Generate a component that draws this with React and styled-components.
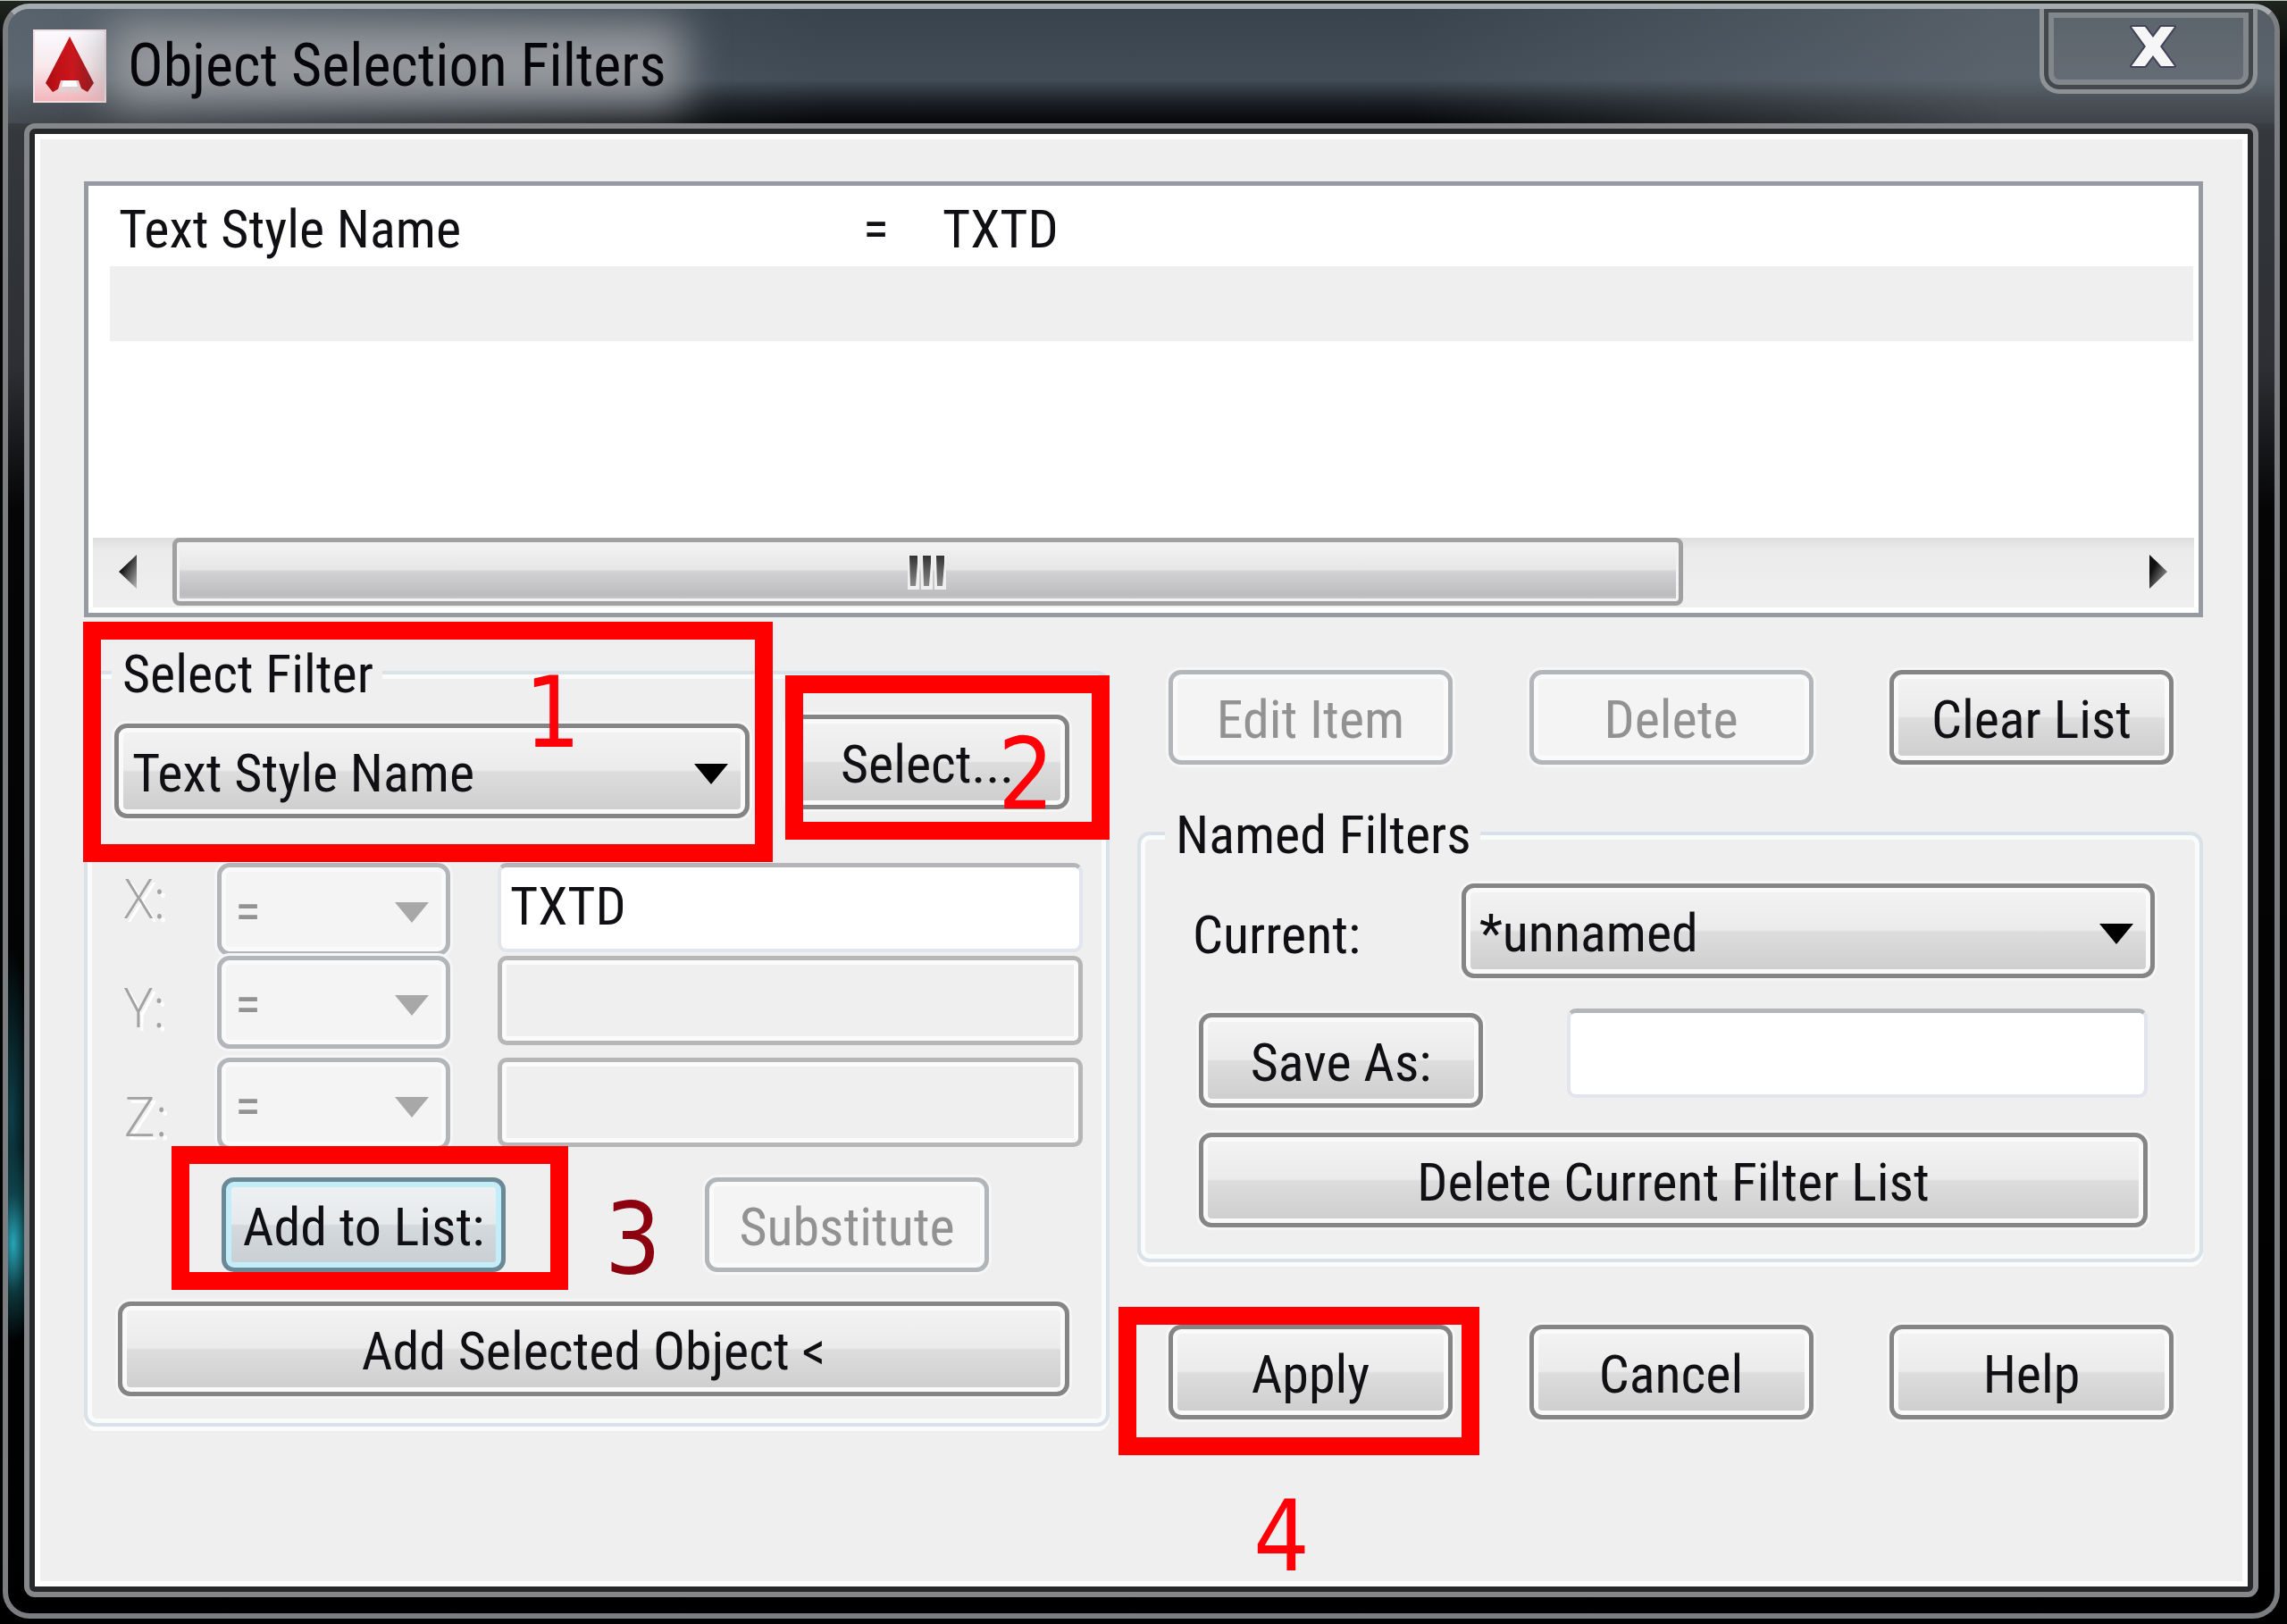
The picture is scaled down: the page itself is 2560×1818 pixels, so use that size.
import React, {useState} from 'react';
import styled, {createGlobalStyle, css} from 'styled-components';

const GlobalStyle = createGlobalStyle`
  * {
    box-sizing: border-box;
  }
  body {
    margin: 0;
    background: #050506;
  }
  body, button, input, select {
    font-family: 'Roboto Condensed', 'Liberation Sans', sans-serif;
    font-size: 60px;
    line-height: 72px;
    color: #101014;
  }
`

const Desktop = styled.div`
  min-height: 100vh;
  display: flex;
  padding: 3px 8px 6px 3px;
  border-top: 1px solid #b4beb6;
  background: linear-gradient(180deg, #20251f, #060707 60px, #000 100%);
`

const Window = styled.div`
  flex: 1;
  display: flex;
  flex-direction: column;
  border: 6px solid #7c7d80;
  border-top-color: #a6abaf;
  border-radius: 30px;
  padding: 0 18px 18px;
  background:
    radial-gradient(ellipse 30px 110px at 6px 1382px, #27a5b7, rgba(20, 90, 100, 0.6) 50%, transparent 100%) no-repeat,
    radial-gradient(ellipse 22px 190px at 4px 1240px, #0d3f48, transparent 100%) no-repeat,
    linear-gradient(180deg, #5f6871 0, #4d555e 90px, #34373b 140px, #2d2f34 400px, #050506 560px, #000 100%);
`

const TitleBar = styled.header`
  position: relative;
  height: 128px;
  margin: 0 -18px;
  padding-left: 28px;
  display: flex;
  align-items: center;
  gap: 24px;
  border-radius: 24px 24px 0 0;
  overflow: hidden;
  background:
    linear-gradient(90deg, rgba(110, 120, 130, 0.6) 0, transparent 36%, transparent 62%, rgba(110, 118, 126, 0.55) 88%),
    linear-gradient(180deg, #38434d 0, #414c57 62%, #1b2025 82%, #050607 100%);
`

const Title = styled.h1`
  position: relative;
  margin: 0;
  font-size: 66px;
  font-weight: 400;
  line-height: 80px;
  color: #06060a;

  /* aero glow behind the caption */
  &::before {
    content: '';
    position: absolute;
    z-index: -1;
    inset: -8px -20px -4px -20px;
    background: #96999d;
    filter: blur(24px);
  }
`

const Caption = styled.div`
  position: relative;
  z-index: 0;
  display: flex;
`

const CloseButton = styled.button`
  position: absolute;
  top: -6px;
  right: 19px;
  width: 244px;
  height: 101px;
  padding: 9px 0 0 9px;
  display: flex;
  align-items: flex-start;
  justify-content: center;
  border: 5px solid #8f9396;
  border-top-color: #a6abaf;
  border-radius: 0 0 22px 22px;
  background: linear-gradient(180deg, #5a636b, #676d76);
  box-shadow: inset 0 0 0 5px #43484c, inset 0 0 0 11px #82878b;

  svg {
    margin-top: 6px;
  }
`

const Frame = styled.div`
  flex: 1;
  display: flex;
  border: 6px solid #85878a;
  border-radius: 12px;
  padding: 6px;
  background: #26282a;
`

const Client = styled.main`
  flex: 1;
  min-width: 0;
  border: 6px solid #fff;
  padding: 47px 44px 40px 49px;
  background: #efefef;
`

const ListBox = styled.section`
  height: 488px;
  display: flex;
  flex-direction: column;
  justify-content: space-between;
  padding: 6px 5px;
  border: 5px solid #969ba3;
  background: #fff;
`

const FilterTable = styled.table`
  width: calc(100% - 20px);
  margin-left: 19px;
  table-layout: fixed;
  border-collapse: collapse;

  tr {
    height: 84px;
  }
  tr:nth-child(2) {
    background: #efefef;
  }
  td {
    padding: 2px 0 0 10px;
  }
  td:nth-child(1) {
    width: 833px;
  }
  td:nth-child(2) {
    width: 89px;
  }
`

const ScrollBar = styled.div`
  height: 78px;
  display: flex;
  background: linear-gradient(180deg, #dedede, #ebebeb 14px, #efefef);
`

const ScrollButton = styled.button`
  width: 89px;
  padding: ${p => (p.$right ? '0 0 4px 8px' : '0 12px 4px 0')};
  border: 0;
  background: transparent;
`

const Track = styled.div`
  flex: 1;
  display: grid;
  grid-template-columns: 7fr 2fr;
`

const Thumb = styled.div`
  height: 76px;
  display: flex;
  align-items: center;
  justify-content: center;
  border: 5px solid #a0a0a0;
  border-radius: 8px;
  background: linear-gradient(180deg, #f4f4f4, #e6e6e6 46%, #d2d2d4 50%, #bcbcbf 90%, #cfcfd1);
  box-shadow: inset 0 0 0 3px #f2f2f2;
`

const Columns = styled.div`
  display: grid;
  grid-template-columns: 1148fr 1193fr;
  gap: 31px;
  padding-top: 24px;
`

const Group = styled.fieldset`
  min-width: 0;
  margin: 0;
  padding: 0;
  border: 4px solid #d9e2e9;
  border-radius: 14px;
  box-shadow: inset 0 0 0 5px #fafbfb, 0 5px 0 #fafbfb;

  legend {
    margin-left: 27px;
    padding: 4px 10px 0 12px;
    background: #efefef;
  }
`

const GroupBody = styled.div`
  padding: ${p => p.$pad};
`

const Row = styled.div`
  display: flex;
  align-items: ${p => p.$align || 'center'};
  justify-content: space-between;
  gap: ${p => p.$gap || 0}px;
  padding: ${p => p.$pad || 0};
`

const face = css`
  border: 5px solid #858585;
  border-radius: 14px;
  background: linear-gradient(180deg, #f3f3f3, #ebebeb 49%, #dddddd 51%, #cdcdcd);
  box-shadow: inset 0 0 0 5px #fafafa, 0 0 0 3px #f6f6f6;

  &:disabled {
    opacity: 1;
    color: #929292;
    border-color: #b2b6ba;
    background: #f4f4f4;
  }
`

const Button = styled.button`
  width: ${p => (p.$wide ? '100%' : '318px')};
  height: 106px;
  padding: 6px 0 0;
  display: block;
  ${face}

  ${p => p.$hot && css`
    border-color: #6b8896;
    background: linear-gradient(180deg, #eef2f3, #e6e9eb 49%, #d3d9dc 51%, #c8ced1);
    box-shadow: inset 0 0 0 6px #c3edf8;
  `}
`

const SelectWrap = styled.div`
  position: relative;
  width: ${p => p.$width};
  height: ${p => p.$height || 106}px;

  svg {
    position: absolute;
    right: 24px;
    top: 50%;
    margin-top: -8px;
    pointer-events: none;
  }
`

const StyledSelect = styled.select`
  appearance: none;
  width: 100%;
  height: 100%;
  padding: 6px 60px 0 15px;
  ${face}
`

const TextBox = styled.input`
  width: ${p => p.$width || 'auto'};
  height: 100px;
  min-width: 0;
  padding: 0 10px 4px;
  border: 4px solid #e3e5ee;
  border-top: 5px solid #b4b5ba;
  border-radius: 10px;
  background: #fff;

  &:disabled {
    border: 5px solid #b6b6b6;
    background: #efefef;
    box-shadow: inset 0 0 0 5px #fbfbfb;
  }
`

const Coordinates = styled.div`
  display: flex;
  align-items: center;
  padding: 28px 26px 0 41px;
`

const AxisLabels = styled.div`
  flex: none;
  width: 104px;
  display: flex;
  flex-direction: column;
  font-family: 'Open Sans', sans-serif;
  font-size: 60px;
  font-weight: 300;
  line-height: 122px;
  color: #a2a2a2;
  text-shadow: 4px 4px 0 #fff;
`

const AxisFields = styled.div`
  flex: 1;
  min-width: 0;
  display: flex;
  flex-direction: column;
`

const AxisRow = styled.div`
  display: grid;
  grid-template-columns: 261px minmax(0, 1fr);
  align-items: start;
  gap: 53px;

  &:last-child {
    margin-top: 10px;
  }
`

/* red call-outs drawn over the dialog, each hung on the control it marks */
const Marked = styled.div`
  position: relative;
  flex: ${p => (p.$grow ? 1 : 'none')};
`

const Highlight = styled.div`
  position: absolute;
  z-index: 1;
  inset: ${p => p.$inset};
  border: 20px solid #ff0000;
  pointer-events: none;
`

const StepNumber = styled.span`
  position: absolute;
  z-index: 2;
  left: ${p => p.$left}px;
  top: ${p => p.$top}px;
  font-family: 'DejaVu Sans Condensed', 'DejaVu Sans', sans-serif;
  font-size: 110px;
  line-height: 120px;
  color: ${p => (p.$dark ? '#8c0010' : '#ff0008')};
  pointer-events: none;
`

function AppIcon() {
  return (
    <svg width="82" height="82" viewBox="0 0 82 82" aria-hidden="true">
      <defs>
        <linearGradient id="paper" x1="0" y1="0" x2="0" y2="1">
          <stop offset="0" stopColor="#fbfbff" />
          <stop offset="0.5" stopColor="#f8e9ec" />
          <stop offset="1" stopColor="#f3b4b9" />
        </linearGradient>
        <linearGradient id="mark" x1="0" y1="0" x2="1" y2="0">
          <stop offset="0" stopColor="#a80d12" />
          <stop offset="0.5" stopColor="#d5161c" />
          <stop offset="1" stopColor="#8d070c" />
        </linearGradient>
      </defs>
      <rect width="82" height="82" fill="url(#paper)" />
      <rect x="1" y="1" width="80" height="80" fill="none" stroke="#f3dfe3" strokeWidth="2" />
      <path d="M41 8 L68 60 L61 70 L54 66 L50 57 H33 L29 66 L22 70 L14 60 Z" fill="url(#mark)" />
      <path d="M41 8 L45 34 L41 57 H33 L29 66 L22 70 Z" fill="#c11319" opacity="0.6" />
      <path d="M31 57 H51 L55 70 H27 Z" fill="#e3cfd2" />
      <path d="M34 57 H48 L50 64 H32 Z" fill="#fff" />
    </svg>
  )
}

function CloseIcon() {
  return (
    <svg width="62" height="56" viewBox="0 0 62 56" aria-hidden="true">
      <path
        d="M7 6 H22 L31 18 L40 6 H55 L39 28 L55 50 H40 L31 38 L22 50 H7 L23 28 Z"
        fill="#f6f6f6" stroke="#42435a" strokeWidth="4" strokeLinejoin="round" paintOrder="stroke"
      />
    </svg>
  )
}

function Caret({muted}) {
  return (
    <svg width="38" height="23" viewBox="0 0 38 23" aria-hidden="true">
      <path d="M0 0 H38 L19 23 Z" fill={muted ? '#a8a8a8' : '#000'} />
    </svg>
  )
}

function ScrollArrow({right}) {
  const id = right ? 'arrowRight' : 'arrowLeft';
  return (
    <svg width="20" height="38" viewBox="0 0 20 38" aria-hidden="true">
      <defs>
        <linearGradient id={id} x1="0" y1="0" x2="1" y2="1">
          <stop offset="0.3" stopColor="#111" />
          <stop offset="1" stopColor="#bbb" />
        </linearGradient>
      </defs>
      <path d={right ? 'M0 0 L20 19 L0 38 Z' : 'M20 0 L0 19 L20 38 Z'} fill={`url(#${id})`} />
    </svg>
  )
}

function Grip() {
  return (
    <svg width="46" height="40" viewBox="0 0 46 40" aria-hidden="true">
      <defs>
        <linearGradient id="grip" x1="0" y1="0" x2="0" y2="1">
          <stop offset="0" stopColor="#333" />
          <stop offset="1" stopColor="#888" />
        </linearGradient>
      </defs>
      {[3, 18, 33].map(x => (
        <g key={x}>
          <rect x={x - 2} y="0" width="13" height="40" fill="#efefef" />
          <path d={`M${x} 2 H${x + 9} V10 L${x + 7} 36 H${x + 1} Z`} fill="url(#grip)" />
        </g>
      ))}
    </svg>
  )
}

const Select = ({id, label, options, disabled, width, height}) => (
  <SelectWrap $width={width} $height={height}>
    <StyledSelect id={id} aria-label={label} disabled={disabled}>
      {options.map(o => <option key={o}>{o}</option>)}
    </StyledSelect>
    <Caret muted={disabled} />
  </SelectWrap>
)

const axes = ['X', 'Y', 'Z'];

export default function App() {
  const [value, setValue] = useState('TXTD');
  const [saveName, setSaveName] = useState('');

  return (
    <Desktop>
      <GlobalStyle />
      <Window>
        <TitleBar>
          <AppIcon />
          <Caption><Title>Object Selection Filters</Title></Caption>
          <CloseButton aria-label="Close"><CloseIcon /></CloseButton>
        </TitleBar>
        <Frame>
          <Client>
            <ListBox>
              <FilterTable>
                <tbody>
                  <tr><td>Text Style Name</td><td>=</td><td>TXTD</td></tr>
                  <tr><td></td><td></td><td></td></tr>
                </tbody>
              </FilterTable>
              <ScrollBar>
                <ScrollButton aria-label="Scroll left"><ScrollArrow /></ScrollButton>
                <Track>
                  <Thumb><Grip /></Thumb>
                </Track>
                <ScrollButton aria-label="Scroll right" $right><ScrollArrow right /></ScrollButton>
              </ScrollBar>
            </ListBox>

            <Columns>
              <Group>
                <legend>Select Filter</legend>
                <GroupBody $pad="9px 0 30px">
                  <Row $gap={40} $pad="0 41px 0 30px" $align="flex-start">
                    <Marked $grow>
                      <Row $pad="10px 0 0">
                        <Select label="Select Filter" options={['Text Style Name']} width="100%" />
                      </Row>
                      <Highlight $inset="-104px -26px -49px -35px" />
                      <StepNumber $left={459} $top={-62}>1</StepNumber>
                    </Marked>
                    <Marked>
                      <Button>Select...</Button>
                      <Highlight $inset="-44px -45px -34px 0" />
                      <StepNumber $left={238} $top={7}>2</StepNumber>
                    </Marked>
                  </Row>

                  <Coordinates>
                    <AxisLabels>
                      {axes.map(a => <label key={a} htmlFor={`value-${a}`}>{a}:</label>)}
                    </AxisLabels>
                    <AxisFields>
                      {axes.map(a => (
                        <AxisRow key={a}>
                          <Select label={`${a} operator`} options={['=']} width="100%" height={104} disabled />
                          {a === 'X'
                            ? <TextBox id="value-X" value={value} onChange={e => setValue(e.target.value)} />
                            : <TextBox id={`value-${a}`} disabled />}
                        </AxisRow>
                      ))}
                    </AxisFields>
                  </Coordinates>

                  <Row $pad="8px 131px 0 150px">
                    <Marked>
                      <Button $hot>Add to List:</Button>
                      <Highlight $inset="-35px -70px -20px -56px" />
                      <StepNumber $left={429} $top={9} $dark>3</StepNumber>
                    </Marked>
                    <Button disabled>Substitute</Button>
                  </Row>
                  <Row $pad="33px 41px 0 34px">
                    <Button $wide>Add Selected Object &lt;</Button>
                  </Row>
                </GroupBody>
              </Group>

              <div>
                <Row $pad="35px 33px 39px 35px">
                  <Button disabled>Edit Item</Button>
                  <Button disabled>Delete</Button>
                  <Button>Clear List</Button>
                </Row>
                <Group>
                  <legend>Named Filters</legend>
                  <GroupBody $pad="18px 50px 35px 58px">
                    <Row $pad="0 0 34px">
                      <Row $pad="10px 0 0"><label htmlFor="current">Current:</label></Row>
                      <Select id="current" options={['*unnamed']} width="776px" />
                    </Row>
                    <Row $align="flex-start" $pad="0 8px 0 7px">
                      <Row $pad="5px 0 0"><Button>Save As:</Button></Row>
                      <TextBox
                        aria-label="Save As"
                        $width="650px"
                        value={saveName}
                        onChange={e => setSaveName(e.target.value)}
                      />
                    </Row>
                    <Row $pad="28px 8px 0 7px">
                      <Button $wide>Delete Current Filter List</Button>
                    </Row>
                  </GroupBody>
                </Group>
                <Row $pad="70px 33px 0 35px">
                  <Marked>
                    <Button>Apply</Button>
                    <Highlight $inset="-20px -30px -40px -56px" />
                    <StepNumber $left={95} $top={177}>4</StepNumber>
                  </Marked>
                  <Button>Cancel</Button>
                  <Button>Help</Button>
                </Row>
              </div>
            </Columns>
          </Client>
        </Frame>
      </Window>
    </Desktop>
  )
}
